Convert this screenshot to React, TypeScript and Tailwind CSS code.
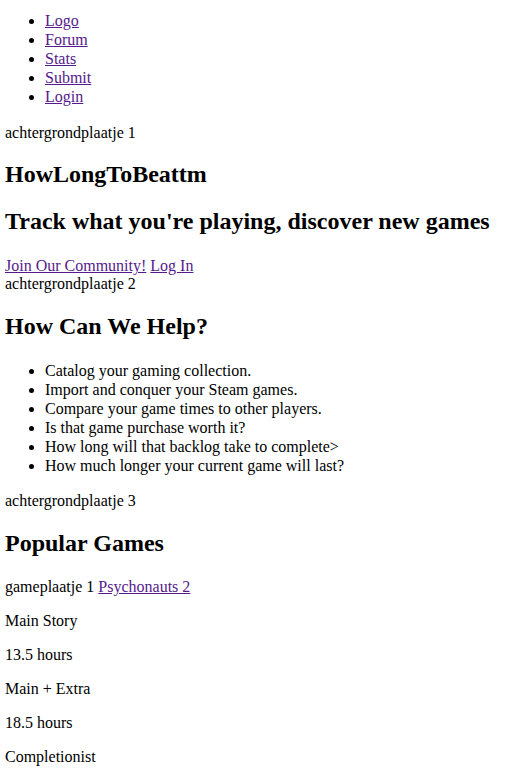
const serif = "font-['Liberation_Serif','Times_New_Roman',serif]"

const navLinks = ['Logo', 'Forum', 'Stats', 'Submit', 'Login']

const helpItems = [
  'Catalog your gaming collection.',
  'Import and conquer your Steam games.',
  'Compare your game times to other players.',
  'Is that game purchase worth it?',
  'How long will that backlog take to complete>',
  'How much longer your current game will last?',
]

const link = 'text-[#551a8b] underline'

export default function App() {
  return (
    <div className={`${serif} bg-white text-black text-base leading-[18px] mx-[5px] mt-[11px] mb-4`}>
      <nav>
        <ul className="list-disc pl-10 mb-[18px]">
          {navLinks.map((l) => (
            <li key={l} className="leading-[19px]">
              <a href="#" className={link}>{l}</a>
            </li>
          ))}
        </ul>
      </nav>

      <header>
        <div>achtergrondplaatje 1</div>
        <h2 className="text-2xl font-bold leading-[27px] mt-[19px] mb-5">HowLongToBeattm</h2>
        <h2 className="text-2xl font-bold leading-[27px] mt-5 mb-[22px]">Track what you're playing, discover new games</h2>
        <div>
          <a href="#" className={link}>Join Our Community!</a>{' '}
          <a href="#" className={link}>Log In</a>
        </div>
      </header>

      <section>
        <div>achtergrondplaatje 2</div>
        <h2 className="text-2xl font-bold leading-[27px] mt-5 mb-5">How Can We Help?</h2>
        <ul className="list-disc pl-10 mt-[21px] mb-[17px]">
          {helpItems.map((t) => (
            <li key={t} className="leading-[19px]">{t}</li>
          ))}
        </ul>
      </section>

      <section>
        <div>achtergrondplaatje 3</div>
        <h2 className="text-2xl font-bold leading-[27px] mt-5 mb-[21px]">Popular Games</h2>
        <p className="my-4">
          gameplaatje 1 <a href="#" className={link}>Psychonauts 2</a>
        </p>
        <p className="my-4">Main Story</p>
        <p className="my-4">13.5 hours</p>
        <p className="my-4">Main + Extra</p>
        <p className="my-4">18.5 hours</p>
        <p className="my-4">Completionist</p>
      </section>
    </div>
  )
}
